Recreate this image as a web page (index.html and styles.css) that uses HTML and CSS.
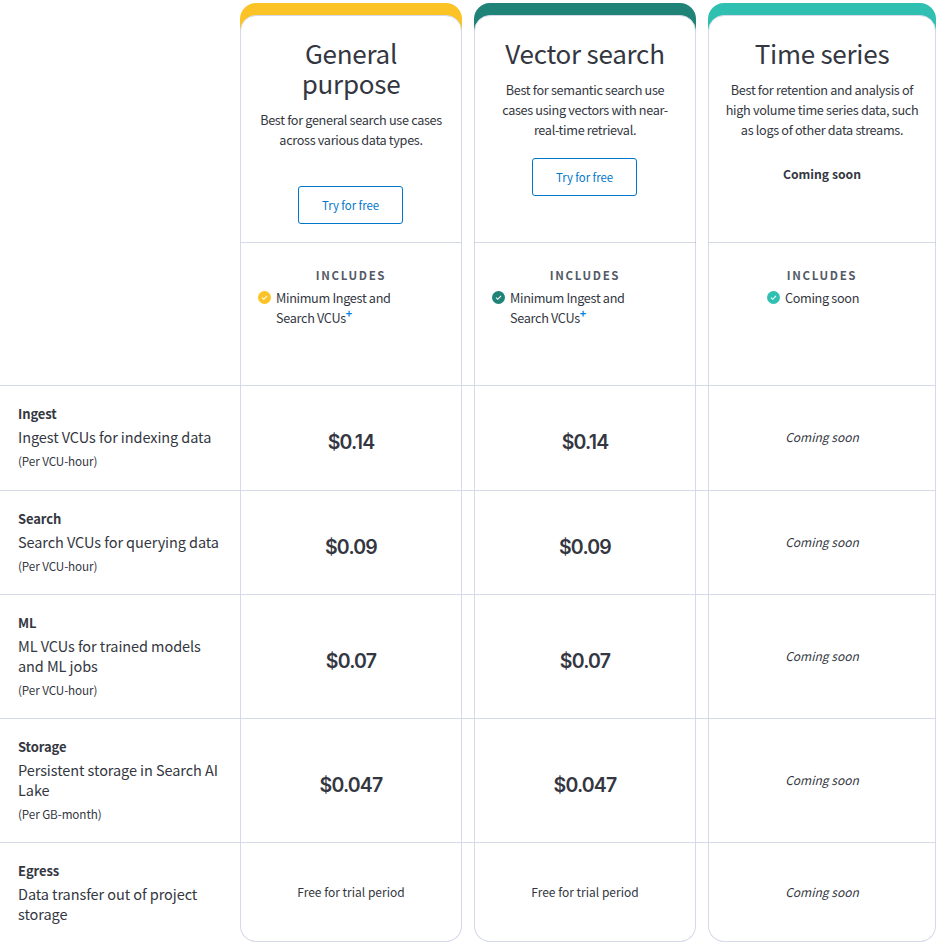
FILE: index.html
```html
<!DOCTYPE html>
<html lang="en">
<head>
<meta charset="utf-8">
<title>Pricing</title>
<link rel="stylesheet" href="styles.css">
</head>
<body>
<div class="table">
  <div class="row head">
    <div class="label"></div>
    <div class="plan yellow">
      <div class="top">
        <h2>General purpose</h2>
        <p>Best for general search use cases across various data types.</p>
        <a class="btn btn-low" href="#">Try for free</a>
      </div>
      <div class="inc">
        <h3>INCLUDES</h3>
        <div class="item">
          <svg class="chk" viewBox="0 0 14 14"><circle cx="7" cy="7" r="7" fill="#fbc326"/><path d="M4.3 7.2 6.2 9l3.5-3.8" fill="none" stroke="#fff" stroke-width="1.1"/></svg>
          <span>Minimum Ingest and Search VCUs<sup>+</sup></span>
        </div>
      </div>
    </div>
    <div class="plan green">
      <div class="top">
        <h2>Vector search</h2>
        <p>Best for semantic search use cases using vectors with near-real-time retrieval.</p>
        <a class="btn" href="#">Try for free</a>
      </div>
      <div class="inc">
        <h3>INCLUDES</h3>
        <div class="item">
          <svg class="chk" viewBox="0 0 14 14"><circle cx="7" cy="7" r="7" fill="#1f8378"/><path d="M4.3 7.2 6.2 9l3.5-3.8" fill="none" stroke="#fff" stroke-width="1.1"/></svg>
          <span>Minimum Ingest and Search VCUs<sup>+</sup></span>
        </div>
      </div>
    </div>
    <div class="plan teal">
      <div class="top">
        <h2>Time series</h2>
        <p>Best for retention and analysis of high volume time series data, such as logs of other data streams.</p>
        <strong class="soon">Coming soon</strong>
      </div>
      <div class="inc">
        <h3>INCLUDES</h3>
        <div class="item center">
          <svg class="chk" viewBox="0 0 14 14"><circle cx="7" cy="7" r="7" fill="#2fc0b2"/><path d="M4.3 7.2 6.2 9l3.5-3.8" fill="none" stroke="#fff" stroke-width="1.1"/></svg>
          <span>Coming soon</span>
        </div>
      </div>
    </div>
  </div>

  <div class="row h105">
    <div class="label"><b>Ingest</b><span>Ingest VCUs for indexing data</span><small>(Per VCU-hour)</small></div>
    <div class="cell price">$0.14</div><div class="cell price">$0.14</div><div class="cell"><em>Coming soon</em></div>
  </div>
  <div class="row h104">
    <div class="label"><b>Search</b><span>Search VCUs for querying data</span><small>(Per VCU-hour)</small></div>
    <div class="cell price">$0.09</div><div class="cell price">$0.09</div><div class="cell"><em>Coming soon</em></div>
  </div>
  <div class="row h124">
    <div class="label"><b>ML</b><span>ML VCUs for trained models and ML jobs</span><small>(Per VCU-hour)</small></div>
    <div class="cell price">$0.07</div><div class="cell price">$0.07</div><div class="cell"><em>Coming soon</em></div>
  </div>
  <div class="row h124">
    <div class="label"><b>Storage</b><span>Persistent storage in Search AI Lake</span><small>(Per GB-month)</small></div>
    <div class="cell price">$0.047</div><div class="cell price">$0.047</div><div class="cell"><em>Coming soon</em></div>
  </div>
  <div class="row last">
    <div class="label"><b>Egress</b><span>Data transfer out of project storage</span></div>
    <div class="cell plain">Free for trial period</div><div class="cell plain">Free for trial period</div><div class="cell"><em>Coming soon</em></div>
  </div>
</div>
</body>
</html>
```
FILE: styles.css
```css
* { box-sizing: border-box; }
html, body { margin: 0; padding: 0; background: #fff; }
body {
  font-family: "Noto Sans CJK SC", "Noto Sans CJK JP", "Open Sans", sans-serif;
  color: #343741;
  font-size: 12.7px;
  letter-spacing: -0.33px;
  line-height: 20px;
}
.table { width: 936px; padding-top: 3px; }
.row {
  display: grid;
  grid-template-columns: 228px 222px 222px 228px;
  column-gap: 12px;
  border-top: 1px solid #d5d9e8;
}
.head { border-top: 0; height: 382px; }
.h105 { height: 105px; }
.h104 { height: 104px; }
.h124 { height: 124px; }
.last { height: 100px; }
.label {
  padding: 18px 0 0 18px;
  display: flex;
  flex-direction: column;
  letter-spacing: 0;
}
.label b { font-size: 13px; font-weight: 700; line-height: 20px; margin-bottom: 3px; letter-spacing: -0.1px; }
.label span { font-size: 14.5px; line-height: 20px; letter-spacing: -0.08px; }
.label small { font-size: 11.7px; line-height: 20px; margin-top: 4px; letter-spacing: -0.1px; }
.plan {
  border-radius: 16px 16px 0 0;
  display: flex;
  flex-direction: column;
}
.yellow { background: #fbc326; }
.green { background: #1f8378; }
.teal { background: #2fc0b2; }
.top, .inc {
  background: #fff;
  border-left: 1px solid #d5d9e8;
  border-right: 1px solid #d5d9e8;
  text-align: center;
}
.top {
  margin-top: 12px;
  height: 228px;
  border-radius: 16px 16px 0 0;
  border-top: 1px solid #d5d9e8;
  border-bottom: 1px solid #d5d9e8;
  padding: 22px 17px 0;
  display: flex;
  flex-direction: column;
  align-items: center;
}
.teal .top { padding-left: 15px; padding-right: 15px; }
.inc { flex: 1; padding-top: 22px; }
h2 { margin: 0; font-size: 26px; line-height: 30px; font-weight: 400; letter-spacing: -0.25px; }
.top p { margin: 12px 0 0; }
.btn {
  display: block;
  margin: 18px 1px 0 0;
  width: 105px;
  height: 38px;
  flex: none;
  border: 1px solid #0077cc;
  border-radius: 3px;
  color: #0077cc;
  font-size: 11.4px;
  letter-spacing: -0.05px;
  line-height: 36px;
  text-decoration: none;
}
.btn-low { margin-top: 36px; }
.soon { margin-top: 24px; font-size: 12.2px; font-weight: 700; letter-spacing: 0; }
h3 { margin: 0; font-size: 11.5px; line-height: 20px; letter-spacing: 1.65px; font-weight: 700; color: #535966; }
.item { display: flex; gap: 5px; padding: 3px 50px 0 17px; text-align: left; }
.item.center { justify-content: center; padding-right: 35px; }
.chk { width: 13px; height: 13px; flex: none; margin-top: 3px; }
sup { color: #0083e0; font-size: 11px; font-weight: 700; line-height: 0; }
.cell {
  display: flex;
  align-items: center;
  justify-content: center;
  background: #fff;
  border-left: 1px solid #d5d9e8;
  border-right: 1px solid #d5d9e8;
  letter-spacing: 0;
}
.cell em { font-size: 12px; font-style: italic; margin-bottom: 2px; }
.price { font-family: Inter, "Noto Sans", sans-serif; font-size: 19.5px; font-weight: 600; letter-spacing: -0.8px; padding-top: 8px; }
.plain { font-size: 12px; }
.last .cell { border-bottom: 1px solid #d5d9e8; border-radius: 0 0 16px 16px; }
.last .cell em { margin-bottom: 0; }
```
